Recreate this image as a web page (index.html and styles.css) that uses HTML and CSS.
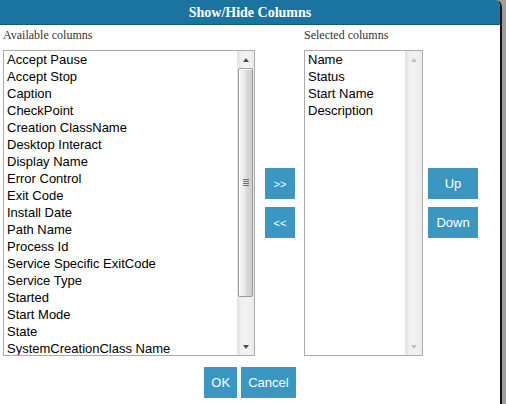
FILE: index.html
```html
<!DOCTYPE html>
<html>
<head>
<meta charset="utf-8">
<link rel="stylesheet" href="styles.css">
</head>
<body>
<div class="dialog">
  <div class="titlebar">Show/Hide Columns</div>
  <div class="content">
    <div class="label col-left">Available columns</div>
    <div class="label col-right">Selected columns</div>

    <div class="listbox left col-left">
      <div class="items">
        <div class="item">Accept Pause</div>
        <div class="item">Accept Stop</div>
        <div class="item">Caption</div>
        <div class="item">CheckPoint</div>
        <div class="item">Creation ClassName</div>
        <div class="item">Desktop Interact</div>
        <div class="item">Display Name</div>
        <div class="item">Error Control</div>
        <div class="item">Exit Code</div>
        <div class="item">Install Date</div>
        <div class="item">Path Name</div>
        <div class="item">Process Id</div>
        <div class="item">Service Specific ExitCode</div>
        <div class="item">Service Type</div>
        <div class="item">Started</div>
        <div class="item">Start Mode</div>
        <div class="item">State</div>
        <div class="item">SystemCreationClass Name</div>
      </div>
      <div class="scrollbar">
        <div class="arrow"><span class="tri up"></span></div>
        <div class="track">
          <div class="thumb"><span class="grip"></span></div>
        </div>
        <div class="arrow"><span class="tri down"></span></div>
      </div>
    </div>

    <div class="btncol col-move">
      <button class="btn small">&gt;&gt;</button>
      <button class="btn small">&lt;&lt;</button>
    </div>

    <div class="listbox right col-right">
      <div class="items">
        <div class="item">Name</div>
        <div class="item">Status</div>
        <div class="item">Start Name</div>
        <div class="item">Description</div>
      </div>
      <div class="scrollbar disabled">
        <div class="arrow"><span class="tri up"></span></div>
        <div class="track"></div>
        <div class="arrow"><span class="tri down"></span></div>
      </div>
    </div>

    <div class="btncol col-order">
      <button class="btn wide">Up</button>
      <button class="btn wide">Down</button>
    </div>
  </div>
  <div class="footer">
    <button class="btn">OK</button>
    <button class="btn">Cancel</button>
  </div>
</div>
</body>
</html>
```

FILE: styles.css
```css
html, body {
  margin: 0;
  padding: 0;
}
body {
  width: 506px;
  height: 404px;
  overflow: hidden;
  background: #9e9e9e;
}
.dialog {
  width: 500px;
  height: 404px;
  background: #ffffff;
  border-right: 2px solid #141414;
  border-top-right-radius: 7px;
  overflow: hidden;
}
.titlebar {
  height: 24px;
  line-height: 25px;
  background: #1b74a0;
  border-bottom: 1px solid #125a7d;
  color: #ffffff;
  font-family: "Liberation Serif", serif;
  font-weight: bold;
  font-size: 14px;
  text-align: center;
}
.content {
  display: grid;
  grid-template-columns: [left] 252px 10px [move] 30px 9px [right] 119px 5px [order] 50px;
  grid-template-rows: auto auto;
  padding-left: 3px;
}
.col-left { grid-column: left; }
.col-move { grid-column: move; grid-row: 2; }
.col-right { grid-column: right; }
.col-order { grid-column: order; grid-row: 2; }
.label {
  grid-row: 1;
  font-family: "Liberation Serif", serif;
  font-size: 12px;
  line-height: 15px;
  color: #333333;
  padding-top: 3px;
  margin-bottom: 7px;
  white-space: nowrap;
}
.listbox {
  grid-row: 2;
  height: 306px;
  box-sizing: border-box;
  border: 1px solid #ababab;
  display: flex;
  overflow: hidden;
  background: #fff;
}
.items {
  flex: 1;
  overflow: hidden;
  font-family: "Liberation Sans", Arial, sans-serif;
  font-size: 13px;
  color: #000;
}
.item {
  height: 17px;
  line-height: 17px;
  padding-left: 3px;
  white-space: nowrap;
}
.scrollbar {
  width: 16px;
  display: flex;
  flex-direction: column;
  background: linear-gradient(to right, #e3e3e3 0, #efefef 3px, #f3f3f3 9px, #eaeaea 16px);
  border-left: 1px solid #e4e4e4;
}
.arrow {
  height: 17px;
  display: flex;
  align-items: center;
  justify-content: center;
}
.tri {
  width: 0;
  height: 0;
  border-left: 3.5px solid transparent;
  border-right: 3.5px solid transparent;
}
.tri.up { border-bottom: 4px solid #4a4a4a; }
.tri.down { border-top: 4px solid #4a4a4a; }
.disabled .tri.up { border-bottom-color: #bfbfbf; }
.disabled .tri.down { border-top-color: #bfbfbf; }
.track {
  flex: 1;
  padding: 0 1px 0 0;
}
.thumb {
  height: 227px;
  border: 1px solid #9a9a9a;
  border-radius: 2px;
  background: linear-gradient(to right, #f4f4f4 0, #e9e9e9 45%, #d9d9d9 55%, #cdcdcd 100%);
  box-shadow: inset 1px 1px 0 #ffffff;
  display: flex;
  align-items: center;
  justify-content: center;
}
.grip {
  width: 6px;
  height: 7px;
  background: repeating-linear-gradient(to bottom, #707070 0, #707070 1px, transparent 1px, transparent 2px);
}
.btncol {
  display: flex;
  flex-direction: column;
  gap: 8px;
  align-self: center;
}
.btn {
  border: none;
  margin: 0;
  background: #3a97c1;
  color: #ffffff;
  font-family: "Liberation Sans", Arial, sans-serif;
  font-size: 13px;
  height: 31px;
  padding: 0 7px;
  cursor: pointer;
}
.btn.small {
  width: 30px;
  padding: 0;
  font-size: 11px;
}
.btn.wide {
  width: 50px;
  padding: 0;
}
.footer {
  display: flex;
  justify-content: center;
  gap: 4px;
  margin-top: 11px;
}
```
